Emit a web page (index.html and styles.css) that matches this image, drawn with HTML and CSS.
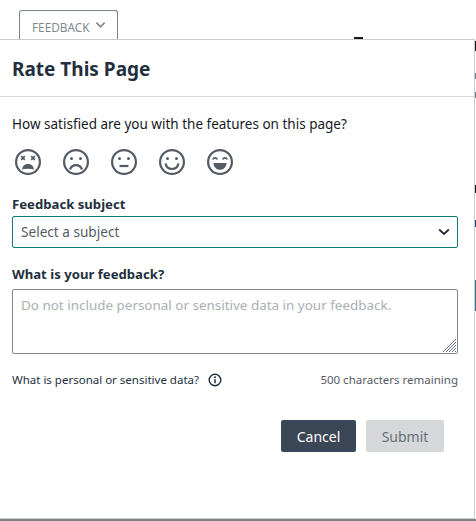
FILE: index.html
```html
<!DOCTYPE html>
<html lang="en">
<head>
<meta charset="utf-8">
<title>Rate This Page</title>
<link rel="stylesheet" href="styles.css">
</head>
<body>
<div class="backdrop">
  <button class="tab"><span class="tab-text">FEEDBACK</span>
    <svg class="tab-chevron" viewBox="0 0 12 8" width="11" height="8"><path d="M1.500 1.500 6 6l4.500-4.500" fill="none" stroke="#7f8a8c" stroke-width="1.800"/></svg>
  </button>
  <span class="behind-glyph"></span>
  <span class="edge edge-a"></span>
  <span class="edge edge-b"></span>
  <span class="edge edge-c"></span>
  <span class="edge edge-d"></span>
  <span class="edge edge-e"></span>
  <span class="edge edge-f"></span>
</div>
<main class="modal">
  <header class="modal-header"><h1>Rate This Page</h1></header>
  <section class="modal-body">
    <p class="question">How satisfied are you with the features on this page?</p>
    <div class="faces">
      <svg class="face" viewBox="0 0 28 28"><circle cx="14" cy="14" r="11.900"/><path class="thin" d="M7.200 8.200l3.600 3.600m0-3.600l-3.600 3.600M17.200 8.200l3.600 3.600m0-3.600l-3.600 3.600"/><path class="fill" d="M8 21.500c.6-3.800 3-5.500 6-5.500s5.400 1.700 6 5.500c-1.800-.5-3.800-.7-6-.7s-4.200.2-6 .7z"/></svg>
      <svg class="face" viewBox="0 0 28 28"><circle cx="14" cy="14" r="11.900"/><circle class="dot" cx="9.500" cy="10.500" r="1.500"/><circle class="dot" cx="18.500" cy="10.500" r="1.500"/><path d="M8 21.500c1.100-2.900 3.200-4.300 6-4.300s4.900 1.400 6 4.300"/></svg>
      <svg class="face" viewBox="0 0 28 28"><circle cx="14" cy="14" r="11.900"/><circle class="dot" cx="9.500" cy="10.500" r="1.500"/><circle class="dot" cx="18.500" cy="10.500" r="1.500"/><path d="M9.500 18h9"/></svg>
      <svg class="face" viewBox="0 0 28 28"><circle cx="14" cy="14" r="11.900"/><circle class="dot" cx="9.500" cy="10.500" r="1.500"/><circle class="dot" cx="18.500" cy="10.500" r="1.500"/><path d="M7.500 15.500c.8 3.600 3.300 5.500 6.500 5.500s5.700-1.900 6.500-5.500"/></svg>
      <svg class="face" viewBox="0 0 28 28"><circle cx="14" cy="14" r="11.900"/><path class="thin" d="M6.800 11.500c.8-2.300 3.700-2.300 4.500 0M16.700 11.500c.8-2.300 3.700-2.300 4.500 0"/><path class="fill" d="M7.500 15h13c0 3.800-2.800 6.800-6.500 6.800S7.500 18.800 7.500 15z"/></svg>
    </div>
    <label class="field-label subject-label">Feedback subject</label>
    <div class="select">
      <span>Select a subject</span>
      <svg viewBox="0 0 12 8" width="12" height="8"><path d="M1.200 1.500 6 6l4.800-4.500" fill="none" stroke="#232f3e" stroke-width="1.900"/></svg>
    </div>
    <label class="field-label feedback-label">What is your feedback?</label>
    <div class="textarea">
      <span>Do not include personal or sensitive data in your feedback.</span>
      <svg class="grip" viewBox="0 0 15 15" width="15" height="15"><path d="M1 14 14 1M4 14 14 4M7 14l7-7M10 14l4-4M13 14l1-1" fill="none" stroke="#6b7280" stroke-width="1"/></svg>
    </div>
    <div class="meta">
      <span class="meta-help">What is personal or sensitive data?
        <svg viewBox="0 0 14 14" width="14" height="14"><circle cx="7" cy="7" r="5.800" fill="none" stroke="#232f3e" stroke-width="1.400"/><path d="M7 6.200v4" stroke="#232f3e" stroke-width="1.500"/><circle cx="7" cy="4.200" r="1" fill="#232f3e"/></svg>
      </span>
      <span class="meta-count">500 characters remaining</span>
    </div>
    <div class="actions">
      <button class="btn btn-cancel">Cancel</button>
      <button class="btn btn-submit">Submit</button>
    </div>
  </section>
</main>
<div class="page-line"></div>
</body>
</html>
```
FILE: styles.css
```css
* { box-sizing: border-box; }
html, body { margin: 0; padding: 0; }
body {
  width: 476px;
  height: 521px;
  position: relative;
  overflow: hidden;
  background: #fff;
  font-family: "Noto Sans", sans-serif;
  color: #16191f;
}
.backdrop { height: 39px; padding: 10px 0 0 19px; }
.tab {
  display: flex;
  align-items: center;
  gap: 5px;
  width: 99px;
  height: 29px;
  padding: 0 0 0 12px;
  border: 1px solid #7b8384;
  border-bottom: 0;
  border-radius: 3px 3px 0 0;
  background: #fff;
  color: #7f8a8c;
  font: 11.800px "Noto Sans", sans-serif;
}
.tab-text { position: relative; top: 2px; }
.behind-glyph {
  position: absolute;
  left: 354px;
  top: 37px;
  width: 9px;
  height: 2px;
  background: #16191f;
}
.edge { position: absolute; left: 475px; width: 1px; background: #16191f; }
.edge-a { top: 41px; height: 10px; }
.edge-b { top: 73px; height: 6px; background: #6f7c8c; }
.edge-c { top: 92px; height: 6px; background: #6f7c8c; }
.edge-d { top: 185px; height: 8px; }
.edge-e { top: 220px; height: 7px; background: #1a3a7a; }
.edge-f { top: 280px; height: 31px; background: #2b7a96; }
.modal {
  width: 475px;
  height: 480px;
  background: #fff;
  border-top: 1px solid #c8cccc;
  border-right: 1px solid #c8cccc;
  border-bottom: 1px solid #c8cccc;
}
.page-line { height: 2px; background: #7d8285; }
.modal-header {
  height: 57px;
  padding: 2px 12px 0;
  display: flex;
  align-items: center;
  border-bottom: 1px solid #d5dbdb;
}
h1 {
  margin: 0;
  font-size: 19px;
  font-weight: 700;
  color: #232f3e;
}
.modal-body { padding: 0 16px 0 12px; }
.question { margin: 17px 0 0; font-size: 13.500px; line-height: 20px; }
.faces { display: flex; gap: 20px; margin: 14px 0 0 2px; height: 28px; }
.face { width: 28px; height: 28px; fill: none; stroke: #545b64; stroke-width: 2.200; }
.face .thin { stroke-width: 1.700; }
.face .dot { fill: #545b64; stroke: none; }
.face .fill { fill: #545b64; stroke: none; }
.field-label { display: block; font-size: 13.150px; font-weight: 700; line-height: 20px; color: #232f3e; }
.subject-label { margin-top: 18px; }
.select {
  display: flex;
  align-items: center;
  justify-content: space-between;
  height: 32px;
  margin-top: 2px;
  padding: 0 7px 1px 8px;
  border: 1px solid #137a7f;
  border-radius: 2px;
  font-size: 13.600px;
  color: #545b64;
}
.feedback-label { margin-top: 16px; }
.textarea {
  position: relative;
  height: 65px;
  margin-top: 5px;
  padding: 5px 8px;
  border: 1px solid #84898c;
  border-radius: 2px;
  font-size: 13.450px;
  line-height: 20px;
  color: #a9afb3;
}
.grip { position: absolute; right: 0; bottom: 0; }
.meta {
  display: flex;
  justify-content: space-between;
  align-items: center;
  margin-top: 18px;
  font-size: 11.500px;
  line-height: 16px;
}
.meta-help { display: flex; align-items: center; gap: 9px; color: #232f3e; }
.meta-count { color: #545b64; }
.actions { display: flex; justify-content: flex-end; gap: 10px; margin: 32px 14px 0 0; }
.btn {
  height: 32px;
  border: 0;
  border-radius: 2px;
  font: 14px "Noto Sans", sans-serif;
}
.btn-cancel { width: 75px; background: #3b4757; color: #fff; }
.btn-submit { width: 78px; background: #d5d7da; color: #687078; }
```
